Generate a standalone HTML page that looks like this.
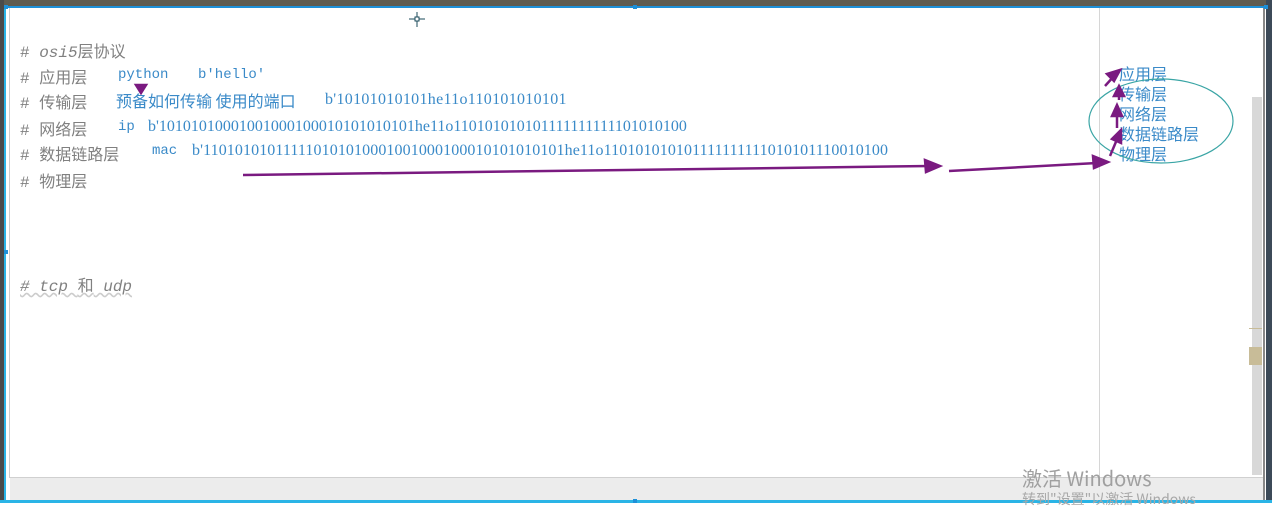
<!DOCTYPE html>
<html><head><meta charset="utf-8"><style>
body{margin:0;width:1272px;height:503px;overflow:hidden;background:#fff;position:relative;font-family:"Liberation Sans","Noto Sans CJK SC",sans-serif}
.a{position:absolute;white-space:nowrap}
.g{color:#808080;font-size:16px;font-family:"Liberation Mono","Noto Sans CJK SC",monospace}
.b{color:#3a8ac8;font-size:16px;font-family:"Liberation Serif","Noto Sans CJK SC",serif}
.m{color:#3a8ac8;font-size:14px;font-family:"Liberation Mono",monospace}
.c{color:#3a8ac8;font-size:16px;font-family:"Noto Sans CJK SC",sans-serif}
</style></head><body>
<div class="a" style="left:0;top:0;width:1272px;height:6px;background:#5f5b50"></div>
<div class="a" style="left:0;top:6px;width:1272px;height:2px;background:#1e90d8"></div>
<div class="a" style="left:0;top:0;width:4px;height:503px;background:#4a4a4a"></div>
<div class="a" style="left:4px;top:6px;width:2px;height:497px;background:#2ab4e6"></div>
<div class="a" style="left:9px;top:8px;width:1px;height:470px;background:#ccc"></div>
<div class="a" style="left:1099px;top:8px;width:1px;height:470px;background:#d6d6d6"></div>
<div class="a" style="left:1252px;top:97px;width:10px;height:378px;background:#d8d8d8"></div>
<div class="a" style="left:1249px;top:347px;width:13px;height:18px;background:#c8bc98"></div>
<div class="a" style="left:1249px;top:328px;width:13px;height:1px;background:#c8bc98"></div>
<div class="a" style="left:1263px;top:8px;width:2px;height:495px;background:#888"></div>
<div class="a" style="left:1266px;top:0;width:6px;height:503px;background:#3c4a58"></div>
<div class="a" style="left:10px;top:477px;width:1253px;height:23px;background:#ececec;border-top:1px solid #d0d0d0"></div>
<div class="a" style="left:0;top:500px;width:1272px;height:3px;background:#2ab4e6"></div>

<div class="a g" style="left:20px;top:38px"># <i>osi5</i>层协议</div>
<div class="a g" style="left:20px;top:64px"># 应用层</div>
<div class="a g" style="left:20px;top:89px"># 传输层</div>
<div class="a g" style="left:20px;top:116px"># 网络层</div>
<div class="a g" style="left:20px;top:141px"># 数据链路层</div>
<div class="a g" style="left:20px;top:168px"># 物理层</div>
<div class="a g" style="left:20px;top:272px;font-style:italic;text-decoration:underline wavy #ccc"># tcp <span style="font-style:normal">和</span> udp</div>

<div class="a m" style="left:118px;top:67px">python</div>
<div class="a m" style="left:198px;top:67px">b'hello'</div>
<div class="a c" style="left:116px;top:88px">预备如何传输 使用的端口</div>
<div class="a b" style="left:325px;top:91px;letter-spacing:0.3px">b'10101010101he11o110101010101</div>
<div class="a m" style="left:118px;top:119px">ip</div>
<div class="a b" style="left:148px;top:118px">b'10101010001001000100010101010101he11o110101010101111111111101010100</div>
<div class="a m" style="left:152px;top:143px">mac</div>
<div class="a b" style="left:192px;top:142px;letter-spacing:0.1px">b'110101010111110101010001001000100010101010101he11o110101010101111111111010101110010100</div>

<div class="a c" style="left:1119px;top:61px">应用层</div>
<div class="a c" style="left:1119px;top:81px">传输层</div>
<div class="a c" style="left:1119px;top:101px">网络层</div>
<div class="a c" style="left:1119px;top:121px">数据链路层</div>
<div class="a c" style="left:1119px;top:141px">物理层</div>

<div class="a c" style="left:1022px;top:463px;color:#a0a0a0;font-size:20px">激活 Windows</div>
<div class="a c" style="left:1022px;top:489px;color:#a8a8a8;font-size:14px">转到"设置"以激活 Windows</div>

<svg class="a" style="left:0;top:0" width="1272" height="503">
<ellipse cx="1161" cy="121" rx="72" ry="42" fill="none" stroke="#3aa5a5" stroke-width="1.2"/>
<g stroke="#7a1a80" stroke-width="2.5" fill="#7a1a80">
<line x1="243" y1="175" x2="930" y2="166"/><polygon points="940,166 925,160 926,172"/>
<line x1="949" y1="171" x2="1097" y2="163"/><polygon points="1108,162 1093,156 1094,168"/>
<line x1="1105" y1="86" x2="1115" y2="75"/><polygon points="1120,70 1107,74 1114,81"/>
<line x1="1119" y1="100" x2="1119" y2="92"/><polygon points="1119,86 1114,96 1124,96"/>
<line x1="1117" y1="128" x2="1117" y2="112"/><polygon points="1117,105 1112,116 1122,116"/>
<line x1="1110" y1="156" x2="1118" y2="137"/><polygon points="1121,130 1112,139 1121,143"/>
<polygon points="136,85 146,85 141,93"/>
</g>
<g stroke="#1a4a5a" stroke-width="1" fill="none"><line x1="417" y1="12" x2="417" y2="27"/><line x1="409" y1="19" x2="425" y2="19"/><rect x="415" y="17" width="4" height="4" fill="#fff"/></g>
<g fill="#1e90d8"><rect x="4" y="5" width="4" height="4"/><rect x="633" y="5" width="4" height="4"/><rect x="1264" y="5" width="4" height="4"/><rect x="633" y="499" width="4" height="4"/><rect x="4" y="250" width="4" height="4"/></g>
</svg>
</body></html>
